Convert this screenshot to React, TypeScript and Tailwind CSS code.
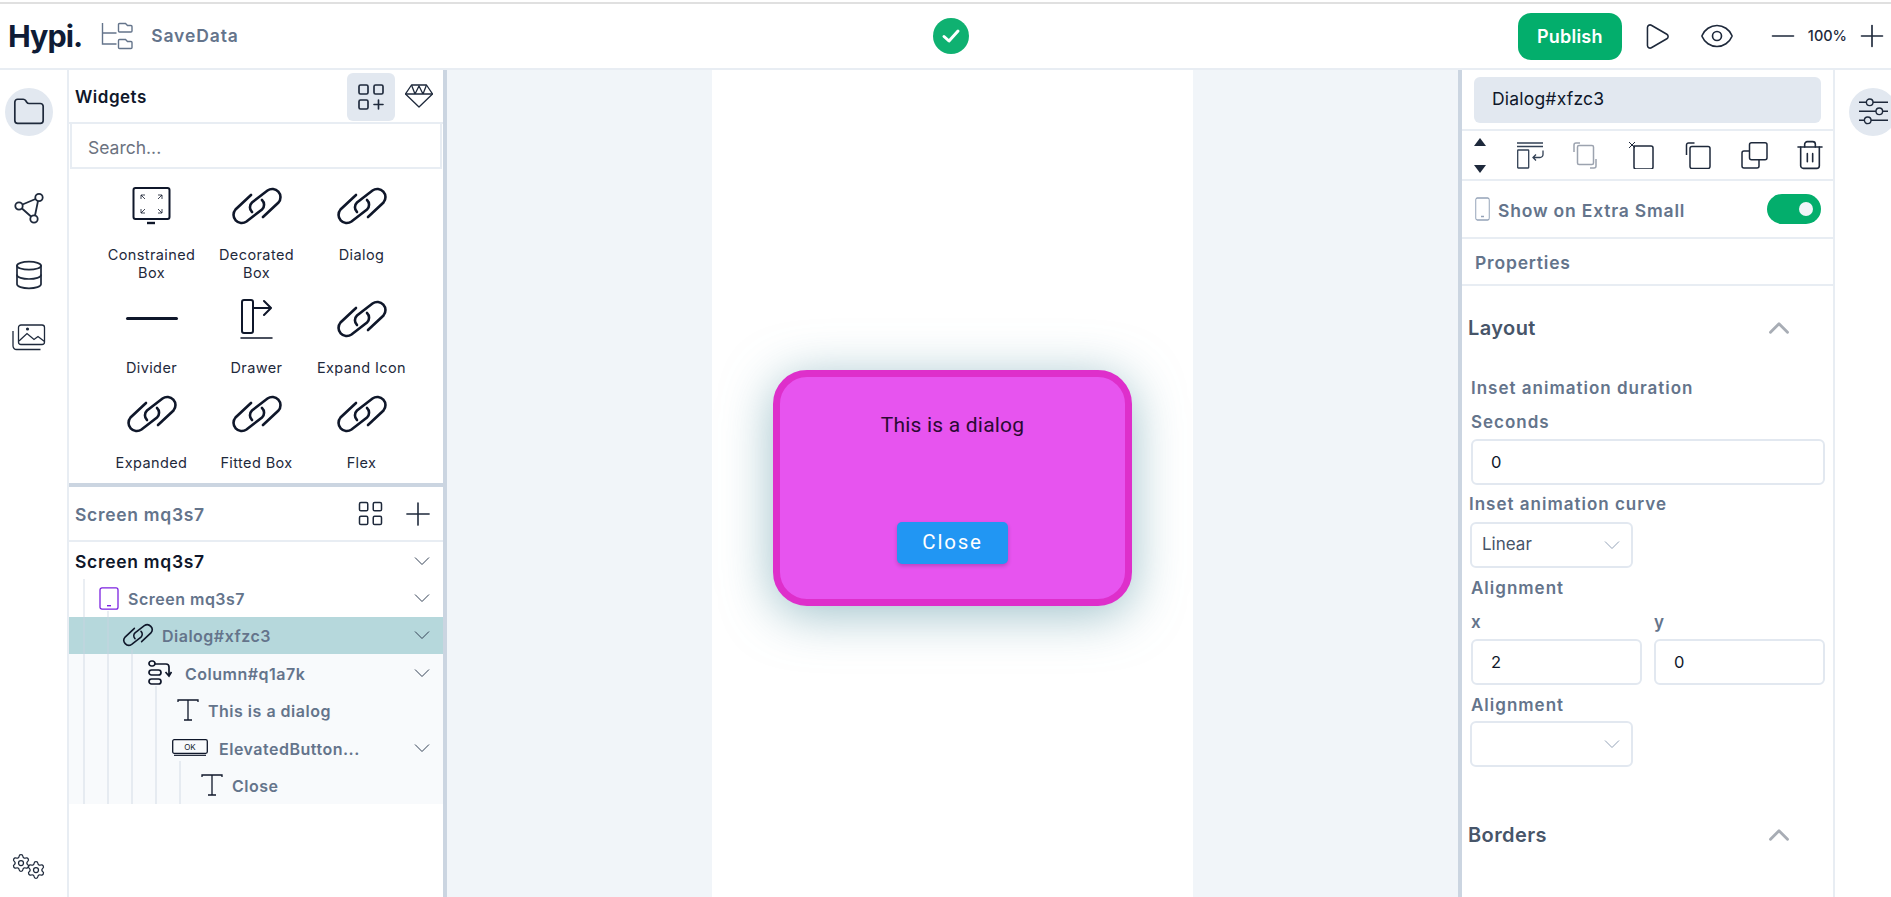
import { Eye, Play, Minus, Plus, Database, Settings, Folder, Trash2, ChevronUp } from 'lucide-react';
import { TbLayoutGridAdd, TbLayoutGrid } from 'react-icons/tb';

const navy = '#0f172a';

function LinkIcon({ className = 'w-[50px] h-[36px]' }: { className?: string }) {
  return (
    <svg viewBox="0 0 50 36" fill="none" stroke={navy} strokeWidth="2.600" strokeLinecap="round" className={`overflow-visible ${className}`}>
      <path d="M30 12A6.500 6.500 0 0 1 30 21.500L14.500 33.500A8.200 8.200 0 0 1 3.500 21.500L19 7" />
      <path d="M20 24A6.500 6.500 0 0 1 20 14.500L35.500 2.500A8.200 8.200 0 0 1 46.500 14.500L31 29" />
    </svg>
  );
}

function Chevron({ className = 'w-[16px] h-[10px]', color = '#334155' }: { className?: string; color?: string }) {
  return (
    <svg viewBox="0 0 16 10" fill="none" stroke={color} strokeWidth="1" className={className}>
      <path d="M1 1.500 8 8.500 15 1.500" />
    </svg>
  );
}

function TextIcon() {
  return (
    <svg viewBox="0 0 22 22" fill="none" stroke={navy} strokeWidth="1.300" className="w-[22px] h-[22px] shrink-0">
      <path d="M1 3V1h20v2M11 1v20M7 21h8" />
    </svg>
  );
}

function ConstrainedIcon() {
  return (
    <svg viewBox="0 0 40 38" fill="none" stroke={navy} className="w-[40px] h-[38px]">
      <rect x="1.500" y="1" width="36" height="31" rx="2" strokeWidth="2" />
      <path d="M9 8v4M9 8h4M9 8l4 4M30 8h-4M30 8v4M30 8l-4 4M9 26h4M9 26v-4M9 26l4-4M30 26h-4M30 26v-4M30 26l-4-4" strokeWidth="0.800" />
      <path d="M15 36h8" strokeWidth="2.400" />
    </svg>
  );
}

function DividerIcon() {
  return <div className="w-[52px] h-[3px] rounded-full bg-[#0f172a]" />;
}

function DrawerIcon() {
  return (
    <svg viewBox="0 0 34 42" fill="none" stroke={navy} strokeLinecap="round" strokeLinejoin="round" className="w-[34px] h-[42px]">
      <rect x="2" y="2" width="11" height="33" rx="2" strokeWidth="2" />
      <path d="M13 10h17M24 3l7 7-7 7" strokeWidth="2" />
      <path d="M1 40h31" strokeWidth="1.500" />
    </svg>
  );
}

function HierarchyIcon() {
  return (
    <svg viewBox="0 0 32 28" fill="none" stroke="#64748b" strokeWidth="1.400" className="w-[32px] h-[28px]">
      <path d="M1.500 1v21h14M1.500 11h14" />
      <path d="M17.500 5V2.500a1 1 0 0 1 1-1h6l2 2h3.500a1 1 0 0 1 1 1V9a1 1 0 0 1-1 1h-11.500a1 1 0 0 1-1-1z" />
      <path d="M17.500 22v-3.500a1 1 0 0 1 1-1h6l2 2h3.500a1 1 0 0 1 1 1V25.500a1 1 0 0 1-1 1h-11.500a1 1 0 0 1-1-1z" />
    </svg>
  );
}

function NetworkIcon() {
  return (
    <svg viewBox="0 0 30 32" fill="none" stroke="#1e293b" strokeWidth="1.800" className="w-[30px] h-[32px]">
      <circle cx="5" cy="14" r="3.700" />
      <circle cx="25" cy="5.500" r="3.700" />
      <circle cx="20" cy="27" r="3.700" />
      <path d="M8.500 12.500 21.500 7M8 16.500 17 24.500M24 9 21 23.500" />
    </svg>
  );
}

function ImagesIcon() {
  return (
    <svg viewBox="0 0 34 27" fill="none" stroke="#1e293b" strokeWidth="1.300" className="w-[34px] h-[27px]">
      <rect x="6.500" y="1" width="26" height="19.500" rx="2.500" />
      <path d="M1 7v15a3.500 3.500 0 0 0 3.500 3.500h24" />
      <path d="M7 17l8-7.500 7 6 4-3 6.500 5" />
      <circle cx="15.500" cy="5" r="0.900" fill="#1e293b" />
    </svg>
  );
}

function DiamondIcon() {
  return (
    <svg viewBox="0 0 28 24" fill="none" stroke="#1e293b" strokeWidth="1.300" strokeLinejoin="round" className="w-[28px] h-[24px]">
      <path d="M6.500 1h15l6 9-13.500 13L.500 10z" />
      <path d="M.500 10h27M6.500 1l3.500 9 4-8 4 8 3.500-9" />
    </svg>
  );
}

function SlidersIcon() {
  return (
    <svg viewBox="0 0 29 28" fill="none" stroke="#1e293b" strokeWidth="1.400" className="w-[29px] h-[28px]">
      <path d="M0 4.300h7.400M14 4.300h15M0 13.300h17M23.600 13.300H29M0 22.300h5.400M12 22.300h17" />
      <circle cx="10.700" cy="4.300" r="3.300" />
      <circle cx="20.300" cy="13.300" r="3.300" />
      <circle cx="8.700" cy="22.300" r="3.300" />
    </svg>
  );
}

function PhoneIcon({ color, className }: { color: string; className: string }) {
  return (
    <svg viewBox="0 0 20 24" fill="none" stroke={color} strokeWidth="1.300" preserveAspectRatio="none" className={`${className} shrink-0`}>
      <rect x="1" y="1" width="18" height="22" rx="2" />
      <path d="M8 19.500h4" strokeWidth="1.500" />
    </svg>
  );
}

function ColumnIcon() {
  return (
    <svg viewBox="0 0 24 25" fill="none" stroke={navy} strokeWidth="1.700" className="w-[24px] h-[25px] shrink-0">
      <rect x="1" y="1" width="6" height="5" rx="2.500" />
      <rect x="1" y="10" width="12" height="5" rx="2.500" />
      <rect x="1" y="19" width="12" height="5" rx="2.500" />
      <path d="M7 4h11a3 3 0 0 1 3 3v8M17.500 12l3.500 4 2.500-4" />
    </svg>
  );
}

function OkIcon() {
  return (
    <svg viewBox="0 0 36 17" fill="none" stroke={navy} className="w-[36px] h-[17px] shrink-0">
      <rect x="0.700" y="0.700" width="34.600" height="13.600" rx="1.500" strokeWidth="1.300" />
      <path d="M2 16.300h32" strokeWidth="1.200" />
      <text x="18" y="10.500" textAnchor="middle" fontSize="8" stroke="none" fill={navy} fontFamily="Inter, sans-serif">OK</text>
    </svg>
  );
}

const toolIcon = 'w-[27px] h-[27px] shrink-0';

function ToolWrap() {
  return (
    <svg viewBox="0 0 27 27" fill="none" stroke="#334155" strokeWidth="1.300" className={toolIcon}>
      <path d="M0 1h26M0 4.500h26" />
      <rect x="0.700" y="8" width="11" height="18" rx="0.500" />
      <path d="M26 8.500v4a3 3 0 0 1-3 3h-7M19 12.500l-3 3 3 3" />
    </svg>
  );
}

function ToolCopyGray() {
  return (
    <svg viewBox="0 0 27 27" fill="none" stroke="#9ca3af" strokeWidth="1.500" className={toolIcon}>
      <path d="M1 10V3a2 2 0 0 1 2-2h4" />
      <rect x="4.500" y="3.500" width="16" height="19" rx="1.500" />
      <path d="M23 17v7a2 2 0 0 1-2 2h-4" />
    </svg>
  );
}

function ToolCut() {
  return (
    <svg viewBox="0 0 27 27" fill="none" stroke="#1e293b" strokeWidth="1.500" className={toolIcon}>
      <path d="M0 0l6 6M6 0 0 6" strokeWidth="1" />
      <path d="M5 4h17a2 2 0 0 1 2 2v19a2 2 0 0 1-2 2H7a2 2 0 0 1-2-2z" />
    </svg>
  );
}

function ToolPaste() {
  return (
    <svg viewBox="0 0 27 27" fill="none" stroke="#1e293b" strokeWidth="1.500" className={toolIcon}>
      <rect x="5" y="4.500" width="20" height="22" rx="2" />
      <path d="M1.500 13V3a2 2 0 0 1 2-2h6" />
    </svg>
  );
}

function ToolDuplicate() {
  return (
    <svg viewBox="0 0 27 27" fill="none" stroke="#1e293b" strokeWidth="1.500" className={toolIcon}>
      <rect x="8.500" y="0.800" width="17.500" height="17" rx="2" />
      <path d="M8.500 9H3a2 2 0 0 0-2 2v13a2 2 0 0 0 2 2h13a2 2 0 0 0 2-2v-6" />
    </svg>
  );
}

function Widget({ label, icon }: { label: string; icon: React.ReactNode }) {
  return (
    <div className="flex flex-col items-center">
      <div className="h-[43px] flex items-center justify-center">{icon}</div>
      <div className="mt-[19px] w-[92px] text-center text-[14.500px] leading-[18px] tracking-[0.400px] text-[#1e293b]">{label}</div>
    </div>
  );
}

function TreeRow({ label, icon, indent, labelClass = 'text-[16px] tracking-[0.500px] text-[#64748b]', rowClass = '', chevron = true }: {
  label: string;
  icon?: React.ReactNode;
  indent: string;
  labelClass?: string;
  rowClass?: string;
  chevron?: boolean;
}) {
  return (
    <div className={`h-[37.400px] flex items-center pr-[13px] ${indent} ${rowClass}`}>
      {icon}
      <span className={`pt-[2px] font-semibold whitespace-nowrap ${labelClass}`}>{label}</span>
      {chevron && <Chevron className="ml-auto w-[16px] h-[10px]" />}
    </div>
  );
}

const guides = [
  'left-[14px] top-[37px]',
  'left-[38px] top-[69px]',
  'left-[62px] top-[107px]',
  'left-[86px] top-[144px]',
  'left-[110px] top-[219px]',
];

function Field({ value, className }: { value: string; className: string }) {
  return (
    <div className={`h-[46px] flex items-center pl-[18px] bg-white border-2 border-[#e2e8f0] rounded-md text-[16.500px] text-[#0f172a] ${className}`}>
      {value}
    </div>
  );
}

function SelectBox({ value }: { value?: string }) {
  return (
    <div className="ml-[8px] w-[163px] h-[46px] flex items-center justify-between pl-[10px] pr-[11px] border-2 border-[#e2e8f0] rounded-md text-[17px] text-[#475569]">
      <span>{value}</span>
      <Chevron color="#94a3b8" />
    </div>
  );
}

function SectionHead({ label }: { label: string }) {
  return (
    <div className="h-[28px] flex items-center justify-between pl-[6px] pr-[37px]">
      <span className="text-[20px] font-semibold tracking-[0.400px] text-[#475569]">{label}</span>
      <ChevronUp size={34} strokeWidth={2} color="#a8adb5" />
    </div>
  );
}

function PropLabel({ children, className }: { children: React.ReactNode; className: string }) {
  return <div className={`text-[17px] leading-[20px] font-semibold tracking-[1px] text-[#64748b] ${className}`}>{children}</div>;
}

export default function App() {
  return (
    <div className="h-screen w-full flex flex-col overflow-hidden bg-white font-['Inter',sans-serif]">
      <div className="mt-[2px] h-[2px] shrink-0 bg-[#e0e0e0]" />
      {/* top bar */}
      <header className="h-[66px] shrink-0 grid grid-cols-[1fr_auto_1fr] items-center border-b-2 border-[#e8edf3]">
        <div className="flex items-center pl-[8px]">
          <span className="text-[30.500px] leading-none font-bold tracking-[-1px] text-[#0f1c36]">Hypi.</span>
          <span className="ml-[19px]"><HierarchyIcon /></span>
          <span className="ml-[18px] text-[17.500px] font-semibold tracking-[0.900px] text-[#64748b]">SaveData</span>
        </div>
        <div className="ml-[11px] w-[36px] h-[36px] rounded-full bg-[#0fb171] flex items-center justify-center">
          <svg viewBox="0 0 20 20" fill="none" stroke="white" strokeWidth="3" strokeLinecap="round" strokeLinejoin="round" className="w-[20px] h-[20px]">
            <path d="M3 10.500 8 15 17 5" />
          </svg>
        </div>
        <div className="flex items-center justify-end">
          <button className="w-[104px] h-[47px] rounded-[13px] bg-[#03ae6c] text-white text-[18px] font-semibold tracking-[0.200px]">Publish</button>
          <Play size={31} strokeWidth={1.200} color="#1e293b" className="ml-[19px]" />
          <Eye size={36} strokeWidth={1.100} color="#1e293b" className="ml-[27px]" />
          <Minus size={36} strokeWidth={1.100} color="#1e293b" className="ml-[30px]" />
          <span className="ml-[7px] text-[14.500px] font-medium text-[#1e293b]">100%</span>
          <Plus size={36} strokeWidth={1.100} color="#1e293b" className="ml-[7px] mr-[1px]" />
        </div>
      </header>

      <div className="flex-1 min-h-0 flex">
        {/* left rail */}
        <aside className="w-[69px] shrink-0 border-r-2 border-[#e8edf3] flex flex-col items-center pr-[10px] pt-[18px]">
          <div className="w-[48px] h-[48px] rounded-full bg-[#e2e8f0] flex items-center justify-center">
            <Folder size={34} strokeWidth={1.200} color="#1e293b" />
          </div>
          <div className="mt-[56px]"><NetworkIcon /></div>
          <Database size={32} strokeWidth={1.300} color="#1e293b" className="mt-[35px]" />
          <div className="mt-[33px]"><ImagesIcon /></div>
          <div className="mt-auto mb-[17px] flex items-end">
            <Settings size={20} strokeWidth={1.500} color="#1e293b" className="-mb-[1px] mr-[-5px] -translate-y-[8px]" />
            <Settings size={20} strokeWidth={1.500} color="#1e293b" />
          </div>
        </aside>

        {/* widgets + tree */}
        <section className="w-[374px] shrink-0 flex flex-col">
          <div className="h-[54px] shrink-0 flex items-center pl-[6px] pr-[10px] border-b-2 border-[#e8edf3]">
            <span className="pt-[4px] text-[17px] font-semibold tracking-[0.500px] text-[#0f172a]">Widgets</span>
            <div className="ml-auto w-[48px] h-[48px] mt-[1px] rounded-md bg-[#e2e8f0] flex items-center justify-center">
              <TbLayoutGridAdd size={36} strokeWidth={1.100} color="#1e293b" />
            </div>
            <span className="ml-[10px]"><DiamondIcon /></span>
          </div>
          <div className="h-[45px] shrink-0 flex items-center pl-[16px] pt-[5px] mx-[1px] border-b-2 border-x-2 border-[#e8edf3] text-[17.500px] text-[#6b7280]">Search...</div>
          <div className="h-[314px] shrink-0 grid grid-cols-[105px_105px_105px] auto-rows-min gap-y-[15px] justify-items-center pl-[30px] pt-[15px]">
            <Widget label="Constrained Box" icon={<ConstrainedIcon />} />
            <Widget label="Decorated Box" icon={<LinkIcon />} />
            <Widget label="Dialog" icon={<LinkIcon />} />
            <Widget label="Divider" icon={<DividerIcon />} />
            <Widget label="Drawer" icon={<DrawerIcon />} />
            <Widget label="Expand Icon" icon={<LinkIcon />} />
            <Widget label="Expanded" icon={<LinkIcon />} />
            <Widget label="Fitted Box" icon={<LinkIcon />} />
            <Widget label="Flex" icon={<LinkIcon />} />
          </div>
          <div className="h-[4px] shrink-0 bg-[#cbd5e1]" />
          <div className="h-[55px] shrink-0 flex items-center pl-[6px] pr-[6px] border-b-2 border-[#e8edf3]">
            <span className="pt-[4px] text-[17.500px] font-semibold tracking-[0.700px] text-[#64748b]">Screen mq3s7</span>
            <TbLayoutGrid size={33} strokeWidth={1.100} color="#1e293b" className="ml-auto" />
            <Plus size={38} strokeWidth={1} color="#1e293b" className="ml-[12px]" />
          </div>
          <div className="relative">
            <TreeRow label="Screen mq3s7" indent="pl-[6px]" labelClass="text-[#0f172a] text-[17.500px] tracking-[0.700px]" />
            <TreeRow label="Screen mq3s7" indent="pl-[30px]" icon={<span className="mr-[9px]"><PhoneIcon color="#7c22e0" className="w-[20px] h-[23px]" /></span>} />
            <TreeRow label="Dialog#xfzc3" indent="pl-[54px]" rowClass="bg-[#b6d8dc]" icon={<span className="mr-[9px] flex"><LinkIcon className="w-[30px] h-[22px]" /></span>} />
            <div className="bg-[#f8fafc]">
              <TreeRow label="Column#q1a7k" indent="pl-[79px]" icon={<span className="mr-[13px] flex"><ColumnIcon /></span>} />
              <TreeRow label="This is a dialog" indent="pl-[108px]" chevron={false} icon={<span className="mr-[9px] flex"><TextIcon /></span>} />
              <TreeRow label="ElevatedButton..." indent="pl-[103px]" icon={<span className="mr-[11px] flex"><OkIcon /></span>} />
              <TreeRow label="Close" indent="pl-[132px]" chevron={false} icon={<span className="mr-[9px] flex"><TextIcon /></span>} />
            </div>
            {guides.map((g) => (
              <div key={g} className={`absolute bottom-0 w-[2px] bg-[#cbd5e1]/40 ${g}`} />
            ))}
          </div>
        </section>

        <div className="w-[4px] shrink-0 bg-[#cbd5e1]" />

        {/* canvas */}
        <main className="flex-1 min-w-0 bg-[#f1f5f9] flex justify-center">
          <div className="w-[481px] bg-white flex items-center justify-center">
            <div className="mt-[8px] w-[359px] h-[236px] rounded-[34px] border-[7px] border-[#de2fcb] bg-[#e754ef] shadow-[0_8px_50px_rgba(90,150,165,0.6)] flex flex-col items-center font-['Roboto',sans-serif]">
              <div className="mt-[36px] text-[21px] leading-[24px] tracking-[0.200px] text-[#2b0a33]">This is a dialog</div>
              <button className="mt-[85px] w-[111px] h-[42px] rounded-[5px] bg-[#2196f3] text-white text-[20.500px] tracking-[1.800px] shadow-[0_2px_4px_rgba(0,0,0,0.2)]">Close</button>
            </div>
          </div>
        </main>

        <div className="w-[4px] shrink-0 bg-[#cbd5e1]" />

        {/* properties */}
        <section className="w-[373px] shrink-0 border-r-2 border-[#e8edf3] flex flex-col">
          <div className="h-[61px] shrink-0 flex items-center px-[12px] border-b-2 border-[#e8edf3]">
            <div className="w-[347px] h-[46px] rounded-md bg-[#e2e8f0] flex items-center pl-[18px] text-[17.500px] tracking-[0.200px] text-[#0f172a]">Dialog#xfzc3</div>
          </div>
          <div className="h-[50px] shrink-0 flex items-center pl-[12px] border-b-2 border-[#e8edf3]">
            <div className="w-[13px] flex flex-col gap-[19px]">
              <div className="w-0 h-0 border-x-[6.500px] border-x-transparent border-b-[8px] border-b-[#1e293b]" />
              <div className="w-0 h-0 border-x-[6.500px] border-x-transparent border-t-[8px] border-t-[#1e293b]" />
            </div>
            <div className="ml-[30px] flex items-center gap-[29px]">
              <ToolWrap />
              <ToolCopyGray />
              <ToolCut />
              <ToolPaste />
              <ToolDuplicate />
              <Trash2 size={32} strokeWidth={1.200} color="#1e293b" className="-ml-[3px] -mt-[1px]" />
            </div>
          </div>
          <div className="h-[58px] shrink-0 flex items-center pl-[13px] pr-[12px] border-b-2 border-[#e8edf3]">
            <PhoneIcon color="#94a3b8" className="w-[15px] h-[24px]" />
            <span className="ml-[8px] pt-[4px] text-[17.500px] font-semibold tracking-[0.800px] text-[#64748b]">Show on Extra Small</span>
            <div className="ml-auto w-[54px] h-[30px] rounded-full bg-[#03ae6c] flex items-center justify-end pr-[8px]">
              <div className="w-[14px] h-[14px] rounded-full bg-[#f1f5f9]" />
            </div>
          </div>
          <div className="h-[47px] shrink-0 flex items-center pl-[13px] pt-[4px] border-b-2 border-[#e8edf3] text-[17.500px] font-semibold tracking-[0.800px] text-[#64748b]">Properties</div>

          <div className="pt-[28px]">
            <SectionHead label="Layout" />
            <PropLabel className="mt-[36px] ml-[9px]">Inset animation duration</PropLabel>
            <PropLabel className="mt-[14px] ml-[9px]">Seconds</PropLabel>
            <Field value="0" className="mt-[7px] ml-[9px] w-[354px]" />
            <PropLabel className="mt-[9px] ml-[7px]">Inset animation curve</PropLabel>
            <div className="mt-[8px]"><SelectBox value="Linear" /></div>
            <PropLabel className="mt-[10px] ml-[9px]">Alignment</PropLabel>
            <div className="mt-[14px] ml-[9px] grid grid-cols-[171px_171px] gap-x-[12px]">
              <PropLabel className="">x</PropLabel>
              <PropLabel className="">y</PropLabel>
              <Field value="2" className="mt-[7px]" />
              <Field value="0" className="mt-[7px]" />
            </div>
            <PropLabel className="mt-[10px] ml-[9px]">Alignment</PropLabel>
            <div className="mt-[6px]"><SelectBox /></div>
            <div className="mt-[54px]"><SectionHead label="Borders" /></div>
          </div>
        </section>

        {/* right rail */}
        <aside className="w-[56px] shrink-0 overflow-hidden pl-[14px] pt-[18px]">
          <div className="w-[48px] h-[48px] rounded-full bg-[#e2e8f0] flex items-center justify-center">
            <SlidersIcon />
          </div>
        </aside>
      </div>
    </div>
  );
}
